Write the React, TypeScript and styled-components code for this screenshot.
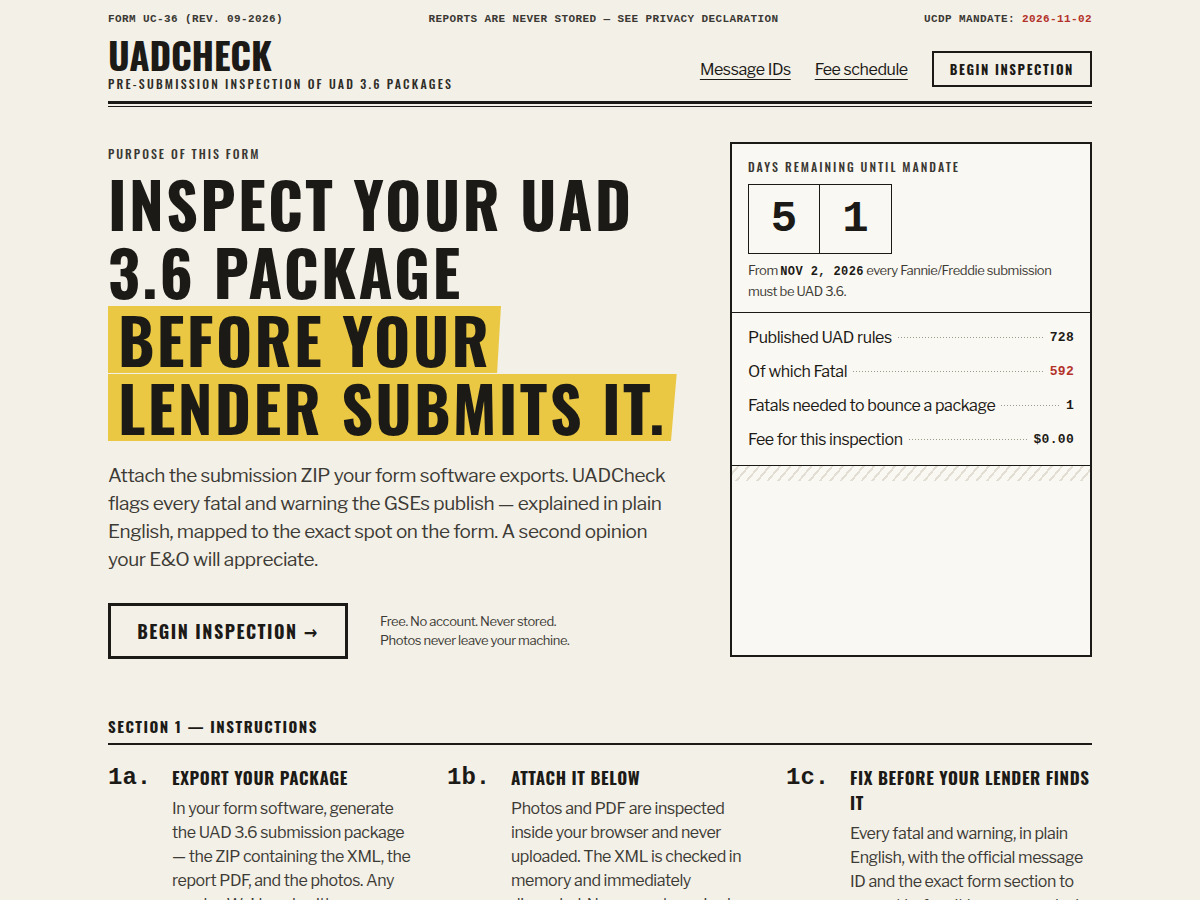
import React from 'react';
import styled, { createGlobalStyle } from 'styled-components';

const INK = '#1c1a16';
const RED = '#b3322a';
const COND = `"Oswald", "Liberation Sans Narrow", "DejaVu Sans Condensed", "DejaVu Sans", sans-serif`;
const MONO = `"Liberation Mono", "Courier New", monospace`;
const BODY = `"Libre Franklin", "Inter", "Noto Sans", sans-serif`;

const GlobalStyle = createGlobalStyle`
  html, body {
    margin: 0;
    padding: 0;
    background: #f3f0e8;
    color: ${INK};
    font-family: ${BODY};
    letter-spacing: -0.025em;
  }
  * { box-sizing: border-box; }
`;

const stats = [
  { label: 'Published UAD rules', value: '728' },
  { label: 'Of which Fatal', value: '592', red: true },
  { label: 'Fatals needed to bounce a package', value: '1' },
  { label: 'Fee for this inspection', value: '$0.00' },
];

const steps = [
  {
    num: '1a.',
    title: 'Export your package',
    body: 'In your form software, generate the UAD 3.6 submission package — the ZIP containing the XML, the report PDF, and the photos. Any vendor. We’d work with every one of them.',
  },
  {
    num: '1b.',
    title: 'Attach it below',
    body: 'Photos and PDF are inspected inside your browser and never uploaded. The XML is checked in memory and immediately discarded. No account required.',
  },
  {
    num: '1c.',
    title: 'Fix before your lender finds it',
    body: 'Every fatal and warning, in plain English, with the official message ID and the exact form section to correct before it leaves your desk.',
  },
];

export default function App() {
  return (
    <Page>
      <GlobalStyle />
      <TopBar>
        <span>FORM UC-36 (REV. 09-2026)</span>
        <span>REPORTS ARE NEVER STORED — SEE PRIVACY DECLARATION</span>
        <span>
          UCDP MANDATE: <Red>2026-11-02</Red>
        </span>
      </TopBar>

      <Header>
        <Brand>
          <Logo>UADCHECK</Logo>
          <Tagline>Pre-submission inspection of UAD 3.6 packages</Tagline>
        </Brand>
        <Nav>
          <NavLink href="#">Message IDs</NavLink>
          <NavLink href="#">Fee schedule</NavLink>
          <HeaderButton>Begin inspection</HeaderButton>
        </Nav>
      </Header>
      <DoubleRule />

      <Hero>
        <HeroText>
          <Eyebrow>Purpose of this form</Eyebrow>
          <Headline>
            <HeadLine>Inspect your UAD</HeadLine>
            <HeadLine>3.6 package</HeadLine>
            <HeadLine>
              <Mark>Before your</Mark>
            </HeadLine>
            <HeadLine>
              <Mark>Lender submits it.</Mark>
            </HeadLine>
          </Headline>
          <Lead>
            Attach the submission ZIP your form software exports. UADCheck flags every fatal and
            warning the GSEs publish — explained in plain English, mapped to the exact spot on the
            form. A second opinion your E&amp;O will appreciate.
          </Lead>
          <CtaRow>
            <CtaButton>Begin inspection →</CtaButton>
            <CtaNote>
              Free. No account. Never stored.
              <br />
              Photos never leave your machine.
            </CtaNote>
          </CtaRow>
        </HeroText>

        <Panel>
          <PanelTop>
            <PanelLabel>Days remaining until mandate</PanelLabel>
            <Digits>
              <Digit>5</Digit>
              <Digit>1</Digit>
            </Digits>
            <PanelNote>
              From <MonoDate>NOV 2, 2026</MonoDate> every Fannie/Freddie submission must be UAD 3.6.
            </PanelNote>
          </PanelTop>
          <StatList>
            {stats.map((s) => (
              <StatRow key={s.label}>
                <StatLabel>{s.label}</StatLabel>
                <Leader />
                <StatValue $red={s.red}>{s.value}</StatValue>
              </StatRow>
            ))}
          </StatList>
          <Hatch />
          <PanelBlank />
        </Panel>
      </Hero>

      <Section>
        <SectionTitle>Section 1 — Instructions</SectionTitle>
        <Steps>
          {steps.map((st) => (
            <Step key={st.num}>
              <StepNum>{st.num}</StepNum>
              <div>
                <StepTitle>{st.title}</StepTitle>
                <StepBody>{st.body}</StepBody>
              </div>
            </Step>
          ))}
        </Steps>
      </Section>
    </Page>
  );
}

const Page = styled.div`
  width: 984px;
  margin: 0 auto;
  padding-top: 12px;
`;

const TopBar = styled.div`
  display: flex;
  justify-content: space-between;
  font-family: ${MONO};
  font-weight: 700;
  font-size: 11px;
  letter-spacing: 0.4px;
  color: #3a3833;
  line-height: 14px;
`;

const Red = styled.span`
  color: ${RED};
`;

const Header = styled.header`
  display: flex;
  justify-content: space-between;
  align-items: flex-end;
  margin-top: 9px;
  padding-bottom: 9px;
`;

const Brand = styled.div`
  display: flex;
  flex-direction: column;
`;

const Logo = styled.div`
  font-family: ${COND};
  font-weight: 700;
  font-size: 37px;
  line-height: 40px;
  letter-spacing: -0.2px;
`;

const Tagline = styled.div`
  font-family: ${COND};
  font-weight: 500;
  font-size: 12px;
  letter-spacing: 2.2px;
  text-transform: uppercase;
  color: #2e2c27;
  margin-top: 0;
`;

const Nav = styled.nav`
  display: flex;
  align-items: center;
  gap: 24px;
  padding-bottom: 5px;
`;

const NavLink = styled.a`
  font-family: ${BODY};
  font-size: 16px;
  color: ${INK};
  text-decoration: underline;
  text-underline-offset: 4px;
  text-decoration-thickness: 1px;
`;

const HeaderButton = styled.button`
  font-family: ${COND};
  font-weight: 700;
  font-size: 13px;
  letter-spacing: 1.6px;
  text-transform: uppercase;
  color: ${INK};
  background: transparent;
  border: 2px solid ${INK};
  height: 36px;
  padding: 0 16px;
`;

const DoubleRule = styled.div`
  height: 6px;
  border-top: 3px solid ${INK};
  border-bottom: 1px solid ${INK};
`;

const Hero = styled.section`
  display: flex;
  justify-content: space-between;
  align-items: flex-start;
  margin-top: 35px;
`;

const HeroText = styled.div`
  width: 580px;
  padding-top: 3px;
`;

const Eyebrow = styled.div`
  font-family: ${COND};
  font-weight: 500;
  font-size: 12px;
  letter-spacing: 2px;
  text-transform: uppercase;
  color: #3a3833;
`;

const Headline = styled.h1`
  margin: 8px 0 0;
  font-family: ${COND};
  font-weight: 700;
  font-size: 62px;
  letter-spacing: 2.3px;
  text-transform: uppercase;
  color: ${INK};
`;

const HeadLine = styled.span`
  display: block;
  height: 68px;
  line-height: 66px;
  white-space: nowrap;
`;

const Mark = styled.span`
  display: inline-block;
  height: 67px;
  line-height: 67px;
  padding: 0 10px;
  background: #eac843;
  clip-path: polygon(0 0, 100% 0, 99% 100%, 0 100%);
`;

const Lead = styled.p`
  margin: 20px 0 0;
  width: 575px;
  font-size: 19px;
  line-height: 28px;
  color: #3d3b35;
`;

const CtaRow = styled.div`
  display: flex;
  align-items: center;
  gap: 32px;
  margin-top: 29px;
`;

const CtaButton = styled.button`
  width: 240px;
  height: 56px;
  border: 3px solid ${INK};
  background: transparent;
  font-family: ${COND};
  font-weight: 700;
  font-size: 18px;
  letter-spacing: 1.5px;
  text-transform: uppercase;
  color: ${INK};
`;

const CtaNote = styled.div`
  font-size: 13px;
  line-height: 19px;
  color: #3d3b35;
`;

const Panel = styled.aside`
  width: 362px;
  height: 515px;
  border: 2px solid ${INK};
  background: #faf8f2;
  display: flex;
  flex-direction: column;
`;

const PanelTop = styled.div`
  padding: 14px 16px 11px;
  border-bottom: 1px solid ${INK};
`;

const PanelLabel = styled.div`
  font-family: ${COND};
  font-weight: 500;
  font-size: 12px;
  letter-spacing: 2px;
  text-transform: uppercase;
  color: #3a3833;
`;

const Digits = styled.div`
  display: flex;
  margin-top: 9px;
`;

const Digit = styled.div`
  width: 72px;
  height: 70px;
  border: 1px solid ${INK};
  & + & {
    border-left: none;
  }
  display: flex;
  align-items: center;
  justify-content: center;
  font-family: ${MONO};
  font-weight: 700;
  font-size: 44px;
  letter-spacing: 0;
  color: ${INK};
`;

const PanelNote = styled.p`
  margin: 7px 0 0;
  font-size: 13px;
  line-height: 19px;
  color: #3d3b35;
`;

const MonoDate = styled.span`
  font-family: ${MONO};
  font-weight: 700;
  font-size: 12px;
  letter-spacing: 0.4px;
  color: ${INK};
`;

const StatList = styled.div`
  padding: 7px 16px 9px;
  border-bottom: 1px solid ${INK};
`;

const StatRow = styled.div`
  display: flex;
  align-items: center;
  height: 34px;
`;

const StatLabel = styled.span`
  font-size: 16px;
  color: ${INK};
  white-space: nowrap;
`;

const Leader = styled.span`
  flex: 1;
  height: 1px;
  margin: 0 6px;
  background-image: linear-gradient(to right, #9d998c 1px, transparent 1px);
  background-size: 3px 1px;
`;

const StatValue = styled.span<{ $red?: boolean }>`
  font-family: ${MONO};
  font-weight: 700;
  font-size: 13px;
  letter-spacing: 0.3px;
  color: ${(p) => (p.$red ? RED : INK)};
`;

const Hatch = styled.div`
  height: 15px;
  background: repeating-linear-gradient(
    -50deg,
    transparent 0 6px,
    #e2ded4 6px 8px
  );
`;

const PanelBlank = styled.div`
  flex: 1;
`;

const Section = styled.section`
  margin-top: 56px;
`;

const SectionTitle = styled.h2`
  margin: 0;
  padding-bottom: 6px;
  border-bottom: 2px solid ${INK};
  font-family: ${COND};
  font-weight: 700;
  font-size: 15px;
  line-height: 22px;
  letter-spacing: 1.5px;
  text-transform: uppercase;
  color: ${INK};
`;

const Steps = styled.div`
  display: grid;
  grid-template-columns: repeat(3, 1fr);
  column-gap: 33px;
  margin-top: 20px;
`;

const Step = styled.div`
  display: grid;
  grid-template-columns: 64px 1fr;
`;

const StepNum = styled.div`
  font-family: ${MONO};
  font-weight: 700;
  font-size: 24px;
  line-height: 25px;
  letter-spacing: 0;
  color: ${INK};
`;

const StepTitle = styled.h3`
  margin: 0;
  font-family: ${COND};
  font-weight: 700;
  font-size: 17px;
  line-height: 25px;
  letter-spacing: 0.6px;
  text-transform: uppercase;
  color: ${INK};
`;

const StepBody = styled.p`
  margin: 7px 0 0;
  font-size: 16px;
  line-height: 24px;
  color: #3d3b35;
`;
